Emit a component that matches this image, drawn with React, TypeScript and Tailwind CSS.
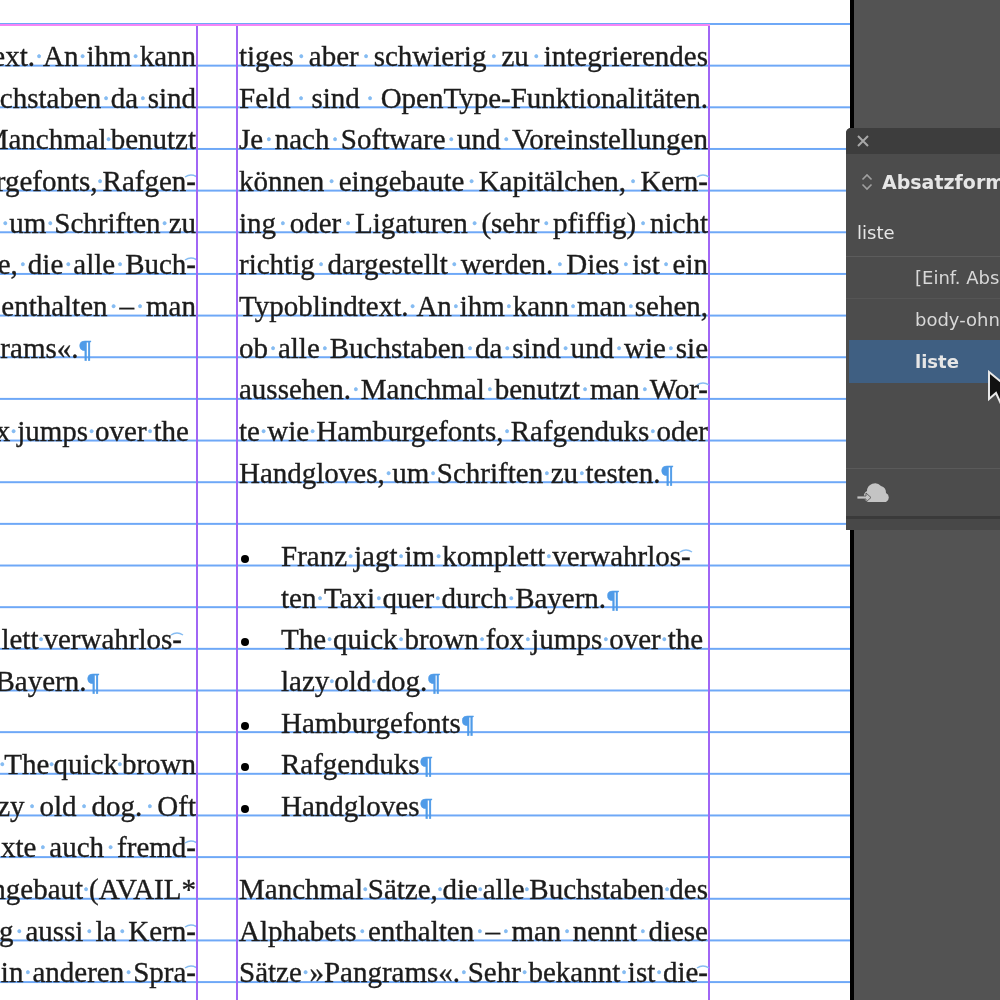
type Row = {
  text?: string;
  gap?: number;
  end?: number;
  mark?: 'hyphen' | 'para';
  trail?: boolean;
  fill?: boolean;
  bullet?: boolean;
  indent?: boolean;
};

const leftRows: Row[] = [
  { text: 'ext. An ihm kann', gap: 8, trail: true },
  { text: 'chstaben da sind', gap: 9.5, trail: true },
  { text: 'Manchmal benutzt', gap: 4, trail: true },
  { text: 'urgefonts, Rafgen-', gap: 5, mark: 'hyphen' },
  { text: ' um Schriften zu', gap: 8, trail: true },
  { text: 'e, die alle Buch-', gap: 10, mark: 'hyphen' },
  { text: 'enthalten – man', gap: 12 },
  { text: 'grams«.', end: 104, mark: 'para' },
  {},
  { text: 'x jumps over the', gap: 7, end: 7 },
  {},
  {},
  {},
  {},
  { text: 'lett verwahrlos-', gap: 5, end: 14, mark: 'hyphen' },
  { text: 'Bayern.', end: 96, mark: 'para' },
  {},
  { text: ' The quick brown', gap: 4, trail: true },
  { text: 'zy old dog. Oft', gap: 15, trail: true },
  { text: 'xte auch fremd-', gap: 13, mark: 'hyphen' },
  { text: 'ngebaut (AVAIL*', gap: 6, trail: true },
  { text: 'g aussi la Kern-', gap: 12, mark: 'hyphen' },
  { text: 'in anderen Spra-', gap: 9, mark: 'hyphen' },
];

const rightRows: Row[] = [
  { text: 'tiges aber schwierig zu integrierendes', fill: true },
  { text: 'Feld sind OpenType-Funktionalitäten.', fill: true },
  { text: 'Je nach Software und Voreinstellungen', fill: true },
  { text: 'können eingebaute Kapitälchen, Kern-', fill: true, mark: 'hyphen' },
  { text: 'ing oder Ligaturen (sehr pfiffig) nicht', fill: true },
  { text: 'richtig dargestellt werden. Dies ist ein', fill: true },
  { text: 'Typoblindtext. An ihm kann man sehen,', fill: true },
  { text: 'ob alle Buchstaben da sind und wie sie', fill: true },
  { text: 'aussehen. Manchmal benutzt man Wor-', fill: true, mark: 'hyphen' },
  { text: 'te wie Hamburgefonts, Rafgenduks oder', fill: true },
  { text: 'Handgloves, um Schriften zu testen.', gap: 7.5, mark: 'para' },
  {},
  { text: 'Franz jagt im komplett verwahrlos-', gap: 7, bullet: true, mark: 'hyphen' },
  { text: 'ten Taxi quer durch Bayern.', gap: 7.5, indent: true, mark: 'para' },
  { text: 'The quick brown fox jumps over the', gap: 7, bullet: true },
  { text: 'lazy old dog.', gap: 5, indent: true, mark: 'para' },
  { text: 'Hamburgefonts', bullet: true, mark: 'para' },
  { text: 'Rafgenduks', bullet: true, mark: 'para' },
  { text: 'Handgloves', bullet: true, mark: 'para' },
  {},
  { text: 'Manchmal Sätze, die alle Buchstaben des', fill: true },
  { text: 'Alphabets enthalten – man nennt diese', fill: true },
  { text: 'Sätze »Pangrams«. Sehr bekannt ist die-', fill: true, mark: 'hyphen' },
];

function Space({ row }: { row: Row }) {
  if (row.fill) {
    return <span className="flex min-w-0 flex-1 justify-center text-[#86bcf2]">·</span>;
  }
  return (
    <span className="flex shrink-0 justify-center text-[#86bcf2]" style={{ width: row.gap ?? 7 }}>
      ·
    </span>
  );
}

function Line({ row, align }: { row: Row; align: 'left' | 'right' }) {
  const words = row.text ? row.text.split(' ') : [];
  const last = words.length - 1;
  return (
    <div
      className={`flex h-[41.66px] items-baseline whitespace-nowrap ${align === 'right' ? 'justify-end' : ''}`}
      style={align === 'right' ? { paddingRight: row.end ?? 0 } : undefined}
    >
      {row.bullet && (
        <span className="w-[42px] shrink-0">
          <span className="mb-[3px] ml-[2px] inline-block h-[8px] w-[8px] rounded-full bg-black" />
        </span>
      )}
      {row.indent && <span className="w-[42px] shrink-0" />}
      {words.map((word, i) => (
        <span key={i} className="contents">
          <span className="relative shrink-0">
            {word}
            {i === last && row.mark === 'hyphen' && (
              <svg className="absolute right-[-3px] top-0 h-[41px] w-[16px]" viewBox="0 0 16 41" fill="none">
                <path d="M2 16q6-4 12 0" stroke="#86bcf2" strokeWidth="1.5" />
              </svg>
            )}
          </span>
          {i !== last && <Space row={row} />}
        </span>
      ))}
      {row.mark === 'para' && (
        <span className="shrink-0 text-[25px] font-bold text-[#4f9be8]">¶</span>
      )}
      {row.trail && <span className="w-0 shrink-0 text-[#b5d6f5]">·</span>}
    </div>
  );
}

export default function App() {
  return (
    <div className="flex h-[1000px] w-[1000px] overflow-hidden bg-[#535353] [font-family:'Liberation_Sans',sans-serif]">
      <div className="relative flex h-full w-[854px] shrink-0 flex-col overflow-hidden border-r-4 border-black bg-white bg-[linear-gradient(#6ea8f7_2px,transparent_2px)] bg-[size:100%_41.66px] bg-[position:0_23px] pt-[24px] blur-[0.6px]">
        <div className="flex h-full w-[710px] border-t-2 border-[#f685f6] text-[29px] leading-[41.66px] text-[#1c1c1c] [-webkit-text-stroke:0.35px_currentColor] [font-family:'Liberation_Serif',serif]">
          <div className="w-[198px] shrink-0 overflow-hidden border-r-2 border-[#a066f5] pt-[10px]">
            {leftRows.map((row, i) => (
              <Line key={i} row={row} align="right" />
            ))}
          </div>
          <div className="w-[38px] shrink-0" />
          <div className="w-[474px] shrink-0 border-x-2 border-[#a066f5] pl-[1px] pt-[10px]">
            {rightRows.map((row, i) => (
              <Line key={i} row={row} align="left" />
            ))}
          </div>
        </div>
      </div>

      {/* Absatzformate panel, floats over the page edge */}
      <div className="absolute left-[846px] top-[128px] flex h-[402px] w-[154px] flex-col overflow-hidden rounded-tl-[5px] bg-[#4c4c4c] text-[19px] text-[#e6e6e6] blur-[0.5px] [font-family:'DejaVu_Sans',sans-serif]">
        <div className="flex h-[26px] shrink-0 items-center bg-[#3d3d3d] pl-[11px]">
          <svg className="h-[12px] w-[12px]" viewBox="0 0 12 12" stroke="#a8a8a8" strokeWidth="2">
            <path d="M1 1l10 10M11 1L1 11" />
          </svg>
        </div>
        <div className="flex h-[56px] shrink-0 items-center pl-[15px]">
          <svg className="mr-[9px] h-[18px] w-[12px] shrink-0" viewBox="0 0 12 18" fill="none" stroke="#a0a0a0" strokeWidth="1.6">
            <path d="M1.5 6.5L6 2l4.500 4.500M1.500 11.500L6 16l4.500-4.500" />
          </svg>
          <span className="whitespace-nowrap font-bold">Absatzformate</span>
        </div>
        <div className="flex h-[46px] shrink-0 items-center pb-[2px] pl-[11px] text-[18px]">liste</div>
        <div className="flex h-[42px] shrink-0 items-center whitespace-nowrap border-t border-[#5c5c5c] pl-[69px] text-[18px] text-[#d8d8d8]">
          [Einf. Absatz]
        </div>
        <div className="flex h-[42px] shrink-0 items-center whitespace-nowrap border-t border-[#555] pl-[69px] text-[18px] text-[#d8d8d8]">
          body-ohne
        </div>
        <div className="ml-[3px] flex h-[43px] shrink-0 items-center bg-[#3f5f82] pl-[66px] text-[18px] font-bold">
          liste
        </div>
        <div className="h-[85px] shrink-0" />
        <div className="flex h-[48px] shrink-0 items-center border-t border-[#5a5a5a] pl-[10px]">
          <svg className="h-[24px] w-[38px]" viewBox="0 0 38 24" fill="#c4c4c4">
            <path d="M12 21a6 6 0 0 1-1-11 8 8 0 0 1 14-5 7 7 0 0 1 5 7 5 5 0 0 1 0 9z" />
            <path d="M1 15h9v-3l5 4.500-5 4.500v-3H1z" stroke="#4c4c4c" strokeWidth="0.8" />
          </svg>
        </div>
        <div className="h-[3px] shrink-0 bg-[#3a3a3a]" />
        <div className="min-h-0 flex-1 bg-[#484848]" />
      </div>

      <svg className="absolute left-[986px] top-[370px] h-[36px] w-[28px]" viewBox="0 0 28 36">
        <path d="M3 2v27l7-6 5 11 6-3-5-10 9-1z" fill="#111" stroke="#e8e8e8" strokeWidth="2" />
      </svg>
    </div>
  );
}
